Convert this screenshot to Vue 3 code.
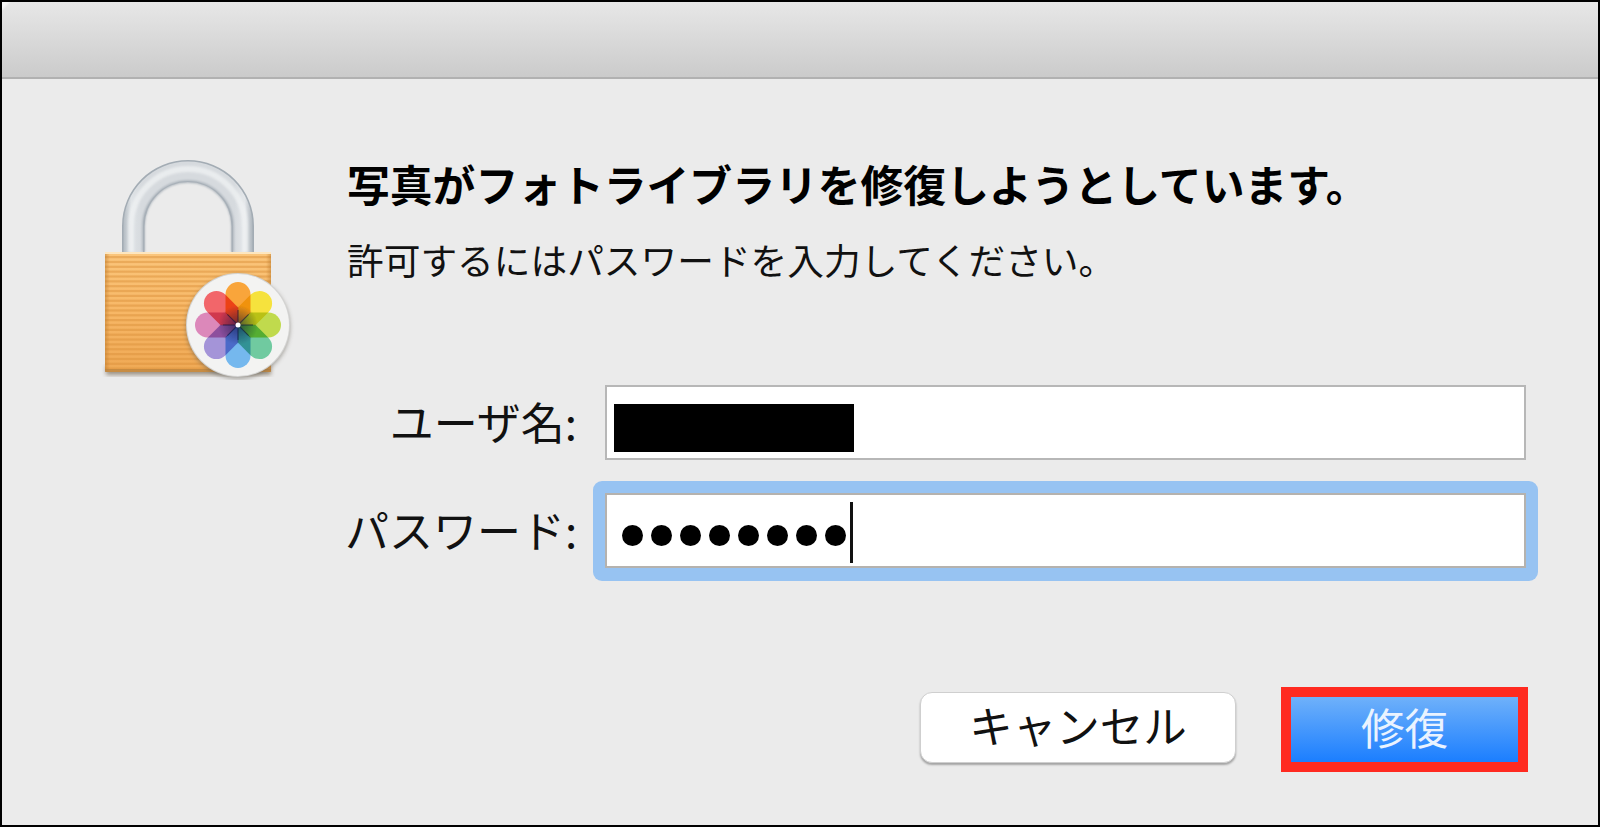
<script setup>
const petals = [
  { angle: 0, color: '#f9a53a' },
  { angle: 45, color: '#f6e23c' },
  { angle: 90, color: '#c0da4e' },
  { angle: 135, color: '#6fcaa0' },
  { angle: 180, color: '#74b8ee' },
  { angle: 225, color: '#a494d8' },
  { angle: 270, color: '#dc88ba' },
  { angle: 315, color: '#f2666a' },
]
const stripes = Array.from({ length: 24 }, (_, i) => 256 + i * 4.85)
const dots = Array.from({ length: 8 }, (_, i) => i)
</script>

<template>
  <div class="window">
    <header class="titlebar"></header>
    <main class="content">
      <section class="top">
        <svg class="lock" viewBox="100 155 200 225" width="200" height="225" aria-hidden="true">
          <defs>
            <linearGradient id="shackle" x1="0" y1="0" x2="1" y2="0">
              <stop offset="0" stop-color="#b4bcc3" />
              <stop offset="0.06" stop-color="#dfe3e6" />
              <stop offset="0.14" stop-color="#d6dade" />
              <stop offset="0.86" stop-color="#d6dade" />
              <stop offset="0.94" stop-color="#e4e7ea" />
              <stop offset="1" stop-color="#aeb6bd" />
            </linearGradient>
            <linearGradient id="bodyV" x1="0" y1="0" x2="0" y2="1">
              <stop offset="0" stop-color="#fbc67c" />
              <stop offset="0.5" stop-color="#f7b766" />
              <stop offset="1" stop-color="#efa955" />
            </linearGradient>
            <linearGradient id="bodyH" x1="0" y1="0" x2="1" y2="0">
              <stop offset="0" stop-color="#b9772a" stop-opacity=".5" />
              <stop offset="0.03" stop-color="#b9772a" stop-opacity="0" />
              <stop offset="0.97" stop-color="#b9772a" stop-opacity="0" />
              <stop offset="1" stop-color="#b9772a" stop-opacity=".5" />
            </linearGradient>
            <radialGradient id="core">
              <stop offset="0" stop-color="#0c1440" stop-opacity=".6" />
              <stop offset="0.6" stop-color="#0c1440" stop-opacity=".25" />
              <stop offset="1" stop-color="#0c1440" stop-opacity="0" />
            </radialGradient>
            <filter id="soft" x="-20%" y="-20%" width="140%" height="140%">
              <feGaussianBlur stdDeviation="2" />
            </filter>
            <filter id="softer" x="-20%" y="-20%" width="140%" height="140%">
              <feGaussianBlur stdDeviation="1.2" />
            </filter>
            <filter id="faint" x="-10%" y="-10%" width="120%" height="120%">
              <feGaussianBlur stdDeviation="0.4" />
            </filter>
          </defs>
          <path d="M122 252V226a66 66 0 0 1 132 0V252H231.500V226a43.500 44 0 0 0-87 0V252Z" fill="#a3acb4" />
          <path d="M123.500 252V226a64.500 64.500 0 0 1 129 0V252H233V226a45 45 0 0 0-90 0V252Z" fill="url(#shackle)" />
          <path d="M131 252V226a57 57 0 0 1 114 0V252" fill="none" stroke="#f2f4f5" stroke-width="6" opacity=".7" filter="url(#softer)" />
          <path d="M143.500 252V226a44.500 44.500 0 0 1 89 0V252" fill="none" stroke="#aab2ba" stroke-width="2.500" filter="url(#softer)" />
          <rect x="106" y="366" width="165" height="9" fill="#5d4b30" opacity=".55" filter="url(#soft)" />
          <rect x="105" y="252" width="166" height="120" rx="2" fill="url(#bodyV)" />
          <rect v-for="y in stripes" :key="y" x="105" :y="y" width="166" height="2.200" fill="#dc923c" opacity=".5" />
          <rect x="105" y="252" width="166" height="120" rx="2" fill="url(#bodyH)" />
          <rect x="105" y="252" width="166" height="2" fill="#fde6bf" />
          <rect x="105" y="369" width="166" height="3" fill="#b7803d" opacity=".7" />
          <circle cx="238" cy="327" r="52" fill="#5f5a50" opacity=".5" filter="url(#soft)" />
          <circle cx="238" cy="325" r="52" fill="#d4d4d3" />
          <circle cx="238" cy="325" r="51" fill="#f3f3f2" />
          <g transform="translate(238 325)" filter="url(#faint)">
            <g class="flower">
              <g v-for="p in petals" :key="p.angle" :transform="`rotate(${p.angle})`">
                <path class="petal" d="M0 0L-12.500-12V-30.500A12.500 12.500 0 0 1 12.500-30.500V-12Z" :fill="p.color" />
              </g>
            </g>
            <circle r="20" fill="url(#core)" />
            <g v-for="p in petals" :key="`l${p.angle}`" :transform="`rotate(${p.angle})`">
              <path d="M0 0L0-15" stroke="#10183f" stroke-width="1.200" opacity=".55" />
            </g>
            <circle r="2.500" fill="#fff" />
          </g>
        </svg>
        <div class="message">
          <h1 class="title">写真がフォトライブラリを修復しようとしています。</h1>
          <p class="subtitle">許可するにはパスワードを入力してください。</p>
        </div>
      </section>

      <form class="form">
        <label class="label">ユーザ名:</label>
        <div class="field">
          <span class="redaction"></span>
        </div>
        <label class="label">パスワード:</label>
        <div class="field focused">
          <span class="dots">
            <span v-for="d in dots" :key="d" class="dot"></span>
          </span>
          <span class="caret"></span>
        </div>
      </form>

      <footer class="actions">
        <button type="button" class="btn cancel"><span class="btn-text">キャンセル</span></button>
        <button type="button" class="btn primary"><span class="btn-text">修復</span></button>
      </footer>
    </main>
  </div>
</template>

<style>
html, body { margin: 0; background: #ebebeb; }
</style>

<style scoped>
.window {
  width: 1600px;
  height: 827px;
  box-sizing: border-box;
  border: 2px solid #000;
  background: #ebebeb;
  display: flex;
  flex-direction: column;
  overflow: hidden;
  font-family: "Noto Sans CJK JP", "Noto Sans", sans-serif;
  color: #000;
}
.titlebar {
  flex: none;
  height: 75px;
  background:
    linear-gradient(135deg, #f6f6f6 0, #f6f6f6 4px, transparent 7px),
    linear-gradient(#e7e7e7, #cbcbcb);
  border-bottom: 2px solid #b1b1b1;
}
.content {
  flex: 1;
  display: flex;
  flex-direction: column;
}
.top {
  display: flex;
  padding: 76px 0 0 98px;
}
.lock {
  flex: none;
  display: block;
}
.flower { isolation: isolate; }
.petal { mix-blend-mode: multiply; }
.message {
  margin-left: 47px;
}
.title {
  margin: -2px 0 0;
  font-size: 42.8px;
  line-height: 60px;
  font-weight: 700;
  white-space: nowrap;
}
.subtitle {
  margin: 21px 0 0;
  font-size: 36.7px;
  line-height: 50px;
  white-space: nowrap;
  color: #111;
}
.form {
  display: grid;
  grid-template-columns: 232px 921px;
  grid-auto-rows: 75px;
  column-gap: 28px;
  row-gap: 33px;
  margin: 5px 0 0 343px;
}
.label {
  align-self: center;
  margin-top: -4px;
  text-align: right;
  font-size: 44px;
  line-height: 60px;
  white-space: nowrap;
  color: #111;
}
.field {
  position: relative;
  box-sizing: border-box;
  border: 2px solid #b7b7b7;
  background: #fff;
  display: flex;
  align-items: center;
}
.redaction {
  width: 240px;
  height: 48px;
  margin: 11px 0 0 7px;
  background: #000;
}
.focused {
  z-index: 0;
  padding-left: 15px;
}
.focused::before {
  content: "";
  position: absolute;
  inset: -14px -14px -15px -14px;
  border-radius: 9px;
  background: #97c3f2;
  z-index: -2;
}
.focused::after {
  content: "";
  position: absolute;
  inset: -2px;
  box-sizing: border-box;
  border: 2px solid #b5b2ae;
  background: #fff;
  z-index: -1;
}
.dots {
  display: flex;
  gap: 8px;
  margin-top: 9px;
}
.dot {
  width: 21px;
  height: 21px;
  border-radius: 50%;
  background: #000;
}
.caret {
  width: 3px;
  height: 61px;
  margin: 4px 0 0 4px;
  background: #111;
}
.actions {
  display: flex;
  justify-content: flex-end;
  align-items: center;
  gap: 45px;
  margin-top: 119px;
  padding-right: 70px;
}
.btn {
  font-family: inherit;
  padding: 0;
  font-size: 43.5px;
  line-height: 1;
  cursor: default;
}
.btn-text {
  display: block;
  margin-top: -6px;
}
.cancel {
  width: 316px;
  height: 71px;
  margin-bottom: 4px;
  box-sizing: border-box;
  border: 1px solid #cfcfcf;
  border-radius: 12px;
  background: #fff;
  color: #111;
  box-shadow: 0 2px 2px rgba(0, 0, 0, .3);
}
.primary {
  width: 247px;
  height: 85px;
  box-sizing: border-box;
  border: 10px solid #ff2a20;
  border-radius: 0;
  background: linear-gradient(#6fb1fa, #1b7eff);
  color: #eaf3ff;
}
</style>
